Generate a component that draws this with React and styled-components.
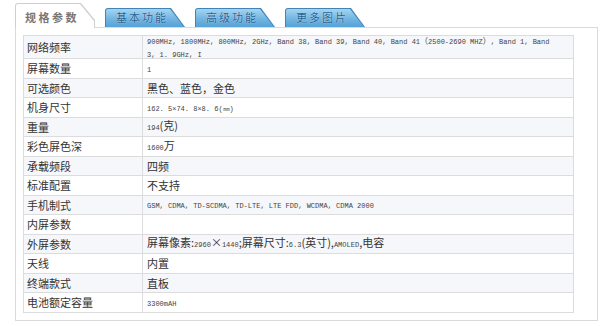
import React from 'react';
import styled, { createGlobalStyle } from 'styled-components';

const GlobalStyle = createGlobalStyle`
  body {
    margin: 0;
    background: #fff;
    font-family: "Noto Sans CJK SC", "Liberation Sans", sans-serif;
  }
`;

const Page = styled.div`
  width: 583px;
  padding: 3px 0 0 15px;
`;

const TabBar = styled.div`
  display: flex;
  align-items: flex-end;
  gap: 10px;
  height: 24px;
  position: relative;
  z-index: 1;
`;

const ActiveTab = styled.div`
  width: 80px;
  height: 25px;
  margin-bottom: -1px;
  background: #cfcfcf;
  border-top-left-radius: 3px;
  clip-path: polygon(0 0, calc(100% - 14px) 0, 100% 17px, 100% 100%, 0 100%);
  display: flex;

  span {
    flex: 1;
    margin: 1px 1px 0 1px;
    background: #fff;
    border-top-left-radius: 2px;
    clip-path: polygon(0 0, calc(100% - 14px) 0, 100% 17px, 100% 100%, 0 100%);
    color: #777;
    font-size: 11px;
    font-weight: bold;
    letter-spacing: 2.5px;
    padding: 5px 0 0 9px;
    box-sizing: border-box;
  }
`;

const Tab = styled.div`
  width: 80px;
  height: 19px;
  background: #3f85ba;
  border-top-left-radius: 3px;
  clip-path: polygon(0 0, calc(100% - 14px) 0, 100% 100%, 0 100%);
  display: flex;

  span {
    flex: 1;
    margin: 1px 1px 0 1px;
    background: linear-gradient(#a6d3f0, #71b5e2 55%, #56a1d6);
    border-top-left-radius: 2px;
    clip-path: polygon(0 0, calc(100% - 14px) 0, 100% 100%, 0 100%);
    color: #225f91;
    text-shadow: 0 0 1px #e6f4fc;
    font-size: 11px;
    line-height: 17px;
    letter-spacing: 2px;
    padding: 0 0 0 10px;
    box-sizing: border-box;
  }
`;

const Panel = styled.div`
  border: 1px solid #dadada;
  padding: 7px 23px 7px 7px;
`;

const Table = styled.table`
  width: 100%;
  border-collapse: collapse;
  table-layout: fixed;
  border: 1px solid #d6d6d6;

  col:first-child {
    width: 119px;
  }
`;

const Row = styled.tr`
  background: ${(p) => (p.$shaded ? '#f6f7fa' : '#fff')};
`;

const Cell = styled.td`
  border: 1px solid #dcdcdc;
  padding: 0 0 0 ${(p) => (p.$value ? 4 : 3)}px;
  font-size: 11px;
  color: #333;
  white-space: ${(p) => (p.$value ? 'normal' : 'nowrap')};
`;

const CellBody = styled.div`
  height: ${(p) => p.$h}px;
  display: flex;
  align-items: center;
  overflow: hidden;
  line-height: 10px;
`;

const Latin = styled.span`
  font-family: "Liberation Mono", monospace;
  font-size: 7px;
  color: #444;
`;

const Paren = styled.span`
  font-family: "Noto Sans CJK SC", sans-serif;
  font-size: 8px;
`;

const specs = [
  ['网络频率', (
    <Latin>
      900MHz, 1800MHz, 800MHz, 2GHz, Band 38, Band 39, Band 40, Band 41<Paren>（</Paren>2500-2690 MHZ<Paren>）</Paren>, Band 1, Band
      <br />
      3, 1. 9GHz, I
    </Latin>
  )],
  ['屏幕数量', <Latin>1</Latin>],
  ['可选颜色', '黑色、蓝色，金色'],
  ['机身尺寸', <Latin>162. 5×74. 8×8. 6(㎜)</Latin>],
  ['重量', <><Latin>194</Latin>(克)</>],
  ['彩色屏色深', <><Latin>1600</Latin>万</>],
  ['承载频段', '四频'],
  ['标准配置', '不支持'],
  ['手机制式', <Latin>GSM, CDMA, TD-SCDMA, TD-LTE, LTE FDD, WCDMA, CDMA 2000</Latin>],
  ['内屏参数', ''],
  ['外屏参数', <>屏幕像素:<Latin>2960</Latin>×<Latin>1440</Latin>;屏幕尺寸:<Latin>6.3</Latin>(英寸),<Latin>AMOLED</Latin>,电容</>],
  ['天线', '内置'],
  ['终端款式', '直板'],
  ['电池额定容量', <Latin>3300mAH</Latin>],
];

const rowHeight = (i) => (i === 0 ? 22 : 18.5);

const tabs = ['基本功能', '高级功能', '更多图片'];

const App = () => (
  <Page>
    <GlobalStyle />
    <TabBar>
      <ActiveTab><span>规格参数</span></ActiveTab>
      {tabs.map((t) => (
        <Tab key={t}><span>{t}</span></Tab>
      ))}
    </TabBar>
    <Panel>
      <Table>
        <colgroup>
          <col />
          <col />
        </colgroup>
        <tbody>
          {specs.map(([label, value], i) => (
            <Row key={label} $shaded={i % 2 === 0}>
              <Cell>
                <CellBody $h={rowHeight(i)}><span>{label}</span></CellBody>
              </Cell>
              <Cell $value>
                <CellBody $h={rowHeight(i)}><span>{value}</span></CellBody>
              </Cell>
            </Row>
          ))}
        </tbody>
      </Table>
    </Panel>
  </Page>
);

export default App;
